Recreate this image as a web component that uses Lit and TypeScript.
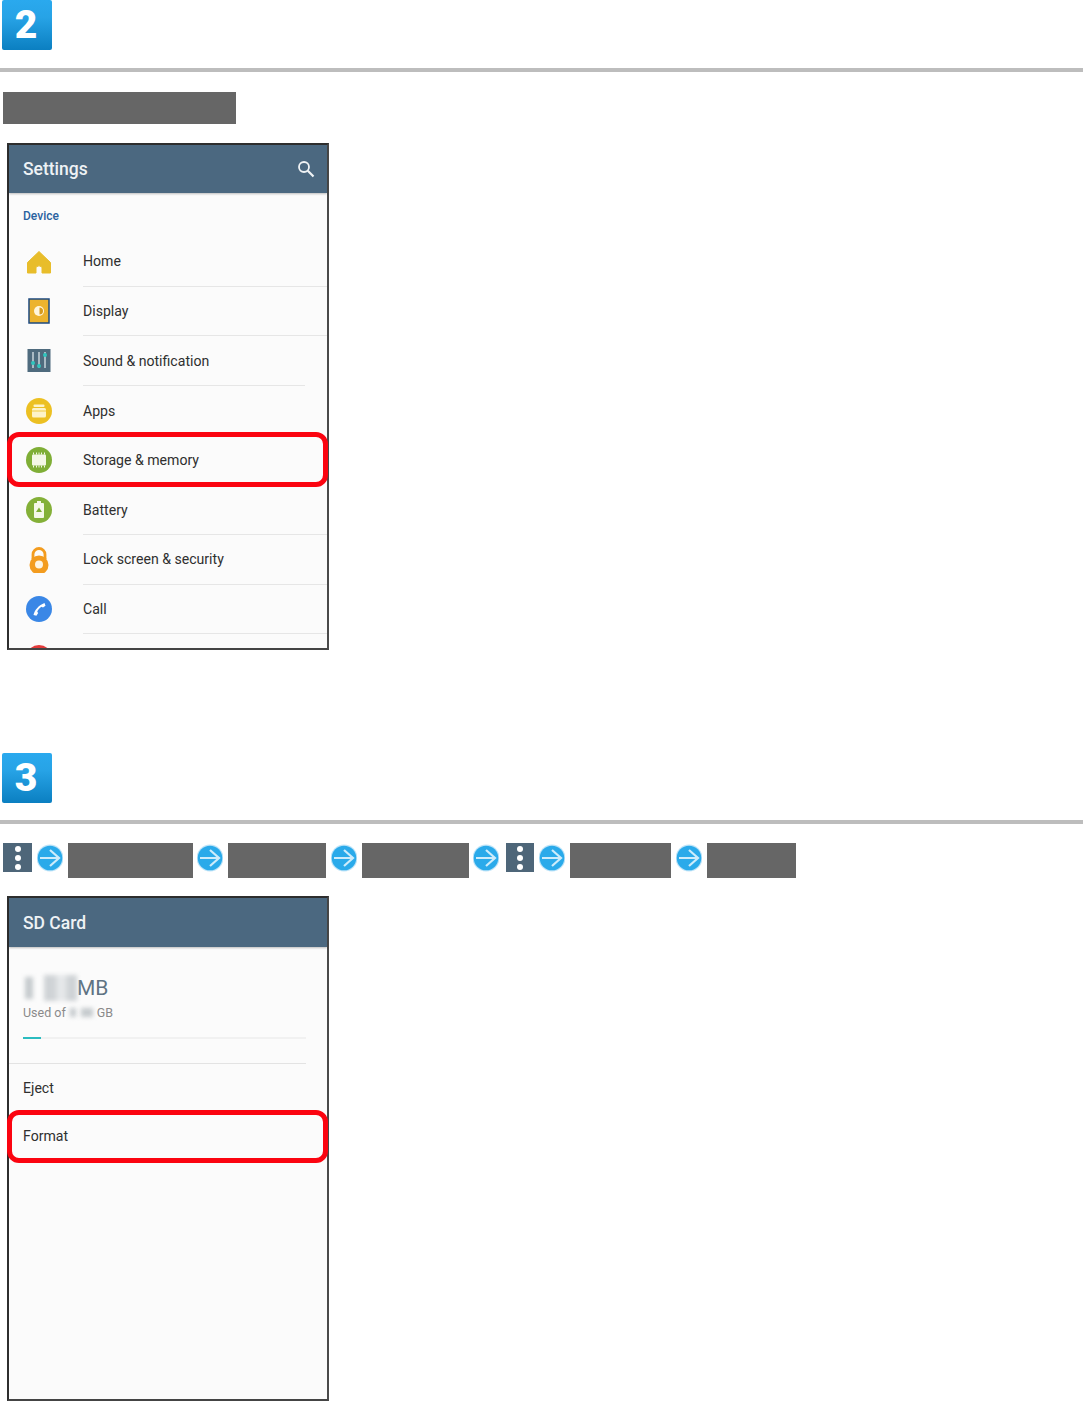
import { LitElement, html, css, svg } from "lit";
import { customElement } from "lit/decorators.js";

const icons: Record<string, unknown> = {
  home: svg`<path d="M13 2.500 L24.500 13.500 V24 H16 V18 Q13 15.500 10 18 V24 H1.500 V13.500 Z" fill="#e8bd2b" stroke="#e8bd2b" stroke-width="1" stroke-linejoin="round"/>`,
  display: svg`<rect x="3" y="1" width="20" height="24" fill="#ecb32e" stroke="#1d4a80" stroke-width="1.500"/><circle cx="13" cy="13" r="5" fill="#fff6dd"/><path d="M13.500 9.500a3.500 3.500 0 0 1 0 7z" fill="#d79a1c"/>`,
  sound: svg`<rect x="1.500" y="1" width="23" height="23" fill="#4f6b7e"/><path d="M7 4V20M13 4V20M19 4V20" stroke="#e6eef2" stroke-width="1.200"/><circle cx="7" cy="15" r="2" fill="#2fc4bd"/><circle cx="13" cy="18" r="2" fill="#2fc4bd"/><circle cx="19" cy="7" r="2" fill="#2fc4bd"/>`,
  apps: svg`<circle cx="13" cy="13" r="13" fill="#ecc022"/><rect x="7.500" y="6.500" width="11" height="2.500" rx="1" fill="#fdf3c9"/><rect x="6" y="10" width="14" height="9.500" rx="1.500" fill="#fdf3c9"/><path d="M6 13H20" stroke="#ecc022" stroke-width=".8"/>`,
  storage: svg`<circle cx="13" cy="13" r="13" fill="#7fae36"/><rect x="6" y="7.500" width="14" height="11" rx="1" fill="#f4f7e6"/><path d="M7.500 5.500V20.500M10.500 5.500V20.500M13 5.500V20.500M15.500 5.500V20.500M18.500 5.500V20.500" stroke="#f4f7e6" stroke-width="1" stroke-dasharray="2 11"/>`,
  battery: svg`<circle cx="13" cy="13" r="13" fill="#84b038"/><rect x="8" y="6" width="10" height="15" rx="1" fill="#f5f8e8"/><rect x="11" y="4" width="4" height="2" fill="#f5f8e8"/><path d="M13 10.500 L16 15 H10 Z" fill="#7fae36"/>`,
  lock: svg`<path d="M7 12V7.500a6 6 0 0 1 12 0V12" fill="none" stroke="#f39c1f" stroke-width="2.800"/><circle cx="13" cy="18" r="9.500" fill="#f39c1f"/><circle cx="13" cy="17.500" r="4" fill="#fdf4e2"/>`,
  call: svg`<circle cx="13" cy="13" r="13" fill="#3a87e6"/><path d="M7.500 19 C8.500 14 13 9 18.500 7 L19.500 9.800 L17 11.500 L15.500 10.700 C13.500 12 12 13.800 11.200 15.700 L12.200 17 L10.400 19.700 Z" fill="#fff"/>`,
  red: svg`<circle cx="13" cy="13" r="13" fill="#e33a3a"/>`,
};

const settings = [
  { t: "Home", i: "home" },
  { t: "Display", i: "display" },
  { t: "Sound & notification", i: "sound", short: true },
  { t: "Apps", i: "apps", none: true },
  { t: "Storage & memory", i: "storage", hl: true, none: true },
  { t: "Battery", i: "battery" },
  { t: "Lock screen & security", i: "lock" },
  { t: "Call", i: "call" },
  { t: "", i: "red", none: true, peek: true },
];

type Crumb = { k: "menu" | "arrow" | "bar"; w?: number; cls?: string };
const crumbs: Crumb[] = [
  { k: "menu" }, { k: "arrow" }, { k: "bar", w: 125 },
  { k: "arrow", cls: "tight" }, { k: "bar", w: 98 },
  { k: "arrow" }, { k: "bar", w: 107 },
  { k: "arrow", cls: "tight" }, { k: "menu", cls: "wide" }, { k: "arrow" }, { k: "bar", w: 101 },
  { k: "arrow" }, { k: "bar", w: 89 },
];

@customElement("app-root")
export class AppRoot extends LitElement {
  static styles = css`
    :host { display: block; width: 1083px; height: 1406px; overflow: hidden; background: #fff; font-family: Roboto, "Liberation Sans", sans-serif; }
    .step-three { margin-top: 103px; }
    .badge { width: 50px; height: 50px; box-sizing: border-box; padding: 0 2px 0 0; margin-left: 2px; border-radius: 2px; background: linear-gradient(#2aa9ee, #27a3e6 35%, #0b7fc1); display: flex; align-items: center; justify-content: center; color: #fff; font: 900 39px/1 Roboto, "Liberation Sans", sans-serif; }
    .rule { height: 4px; background: #bdbdbd; }
    .step-two .rule { margin-top: 18px; }
    .step-three .rule { margin-top: 17px; }
    .lead { width: 233px; height: 32px; margin: 20px 0 19px 3px; background: #666; }
    .crumbs { display: flex; align-items: flex-start; gap: 5px; margin: 19px 0 18px 3px; height: 35px; }
    .bar { height: 35px; background: #666; }
    .menu { width: 29px; height: 29px; background: #4e6679; display: flex; flex-direction: column; align-items: center; justify-content: center; gap: 3px; }
    .menu i { width: 6px; height: 6px; border-radius: 50%; background: #fff; }
    .menu.wide { width: 28px; margin-left: 2px; }
    .arrow { width: 26px; height: 28px; margin-top: 1px; display: block; }
    .arrow.tight { margin-left: -1px; }
    .phone { width: 322px; margin-left: 7px; box-sizing: border-box; border: 2px solid #2e2e2e; border-right-color: #4a4a4a; border-bottom-color: #444; background: #fbfbfb; }
    .phone.settings { height: 507px; }
    .phone.card { height: 505px; }
    .head { height: 48px; box-sizing: border-box; background: #4b6880; color: #eef2f5; display: flex; align-items: center; justify-content: space-between; padding: 0 12px 0 14px; font-size: 17.500px; font-weight: 500; box-shadow: 0 1px 2px rgba(0,0,0,.25); }
    .phone.card .head { height: 49px; }
    .section { height: 44px; box-sizing: border-box; padding: 1px 0 0 14px; display: flex; align-items: center; color: #2a629f; font-size: 12px; font-weight: 500; }
    .row { position: relative; height: 49.670px; box-sizing: border-box; display: flex; align-items: center; color: #2f2f2f; font-size: 14.100px; }
    .row.peek { height: 13.600px; overflow: hidden; align-items: flex-start; }
    .row.peek .icon { margin-top: 11px; }
    .icon { width: 26px; height: 26px; margin-left: 17px; margin-right: 31px; flex: none; }
    .label { flex: 1; align-self: stretch; display: flex; align-items: center; box-sizing: border-box; border-bottom: 1px solid #e6e6e6; }
    .row.short .label { flex: none; width: 222px; }
    .row.none .label { border-bottom: none; }
    .hl { position: absolute; left: -2px; right: -1px; top: -4px; bottom: -2px; border: 5px solid #fb0410; border-radius: 12px; pointer-events: none; }
    .usage { height: 116px; box-sizing: border-box; padding: 25px 0 0 14px; }
    .amount { display: flex; align-items: center; height: 32px; color: #5f7383; font-size: 21px; }
    .smudge { display: block; background: #c6cbce; filter: blur(2px); }
    .s1 { width: 8px; height: 22px; margin-left: 2px; margin-right: 11px; }
    .s2 { width: 33px; height: 26px; background: linear-gradient(90deg, #cfd3d6 0 30%, #e6e8ea 45% 60%, #cfd3d6 75%); }
    .used { display: flex; align-items: center; margin-top: -1px; color: #8a8a8a; font-size: 12.500px; height: 18px; gap: 4px; }
    .s3 { width: 6px; height: 9px; }
    .s4 { width: 12px; height: 9px; margin-left: 1px; }
    .track { margin-top: 16px; width: 283px; height: 2px; background: #f1f1f1; }
    .fill { width: 18px; height: 2px; background: #2bbcc0; }
    .divide { height: 1px; margin-right: 21px; background: #e3e3e3; }
    .item { position: relative; height: 48px; box-sizing: border-box; padding-left: 14px; display: flex; align-items: center; color: #2f2f2f; font-size: 14.100px; }
    .hl-card { position: absolute; left: -2px; right: -1px; top: -2px; bottom: -3px; border: 5px solid #fb0410; border-radius: 12px; pointer-events: none; }
  `;

  private arrow(cls = "") {
    return html`<svg class="arrow ${cls}" viewBox="0 0 26 28"><circle cx="13" cy="14" r="13.500" fill="#bfe4f8"/><circle cx="13" cy="14" r="12.300" fill="#2aaaea"/><path d="M3 14H22M13 6L22 14L13 22" fill="none" stroke="#cdecfb" stroke-width="2.200"/></svg>`;
  }

  private crumb(c: Crumb) {
    if (c.k === "menu") return html`<div class="menu ${c.cls ?? ""}"><i></i><i></i><i></i></div>`;
    if (c.k === "arrow") return this.arrow(c.cls);
    return html`<div class="bar" style="width:${c.w}px"></div>`;
  }

  render() {
    return html`
      <section class="step-two">
        <div class="badge">2</div>
        <div class="rule"></div>
        <div class="lead"></div>
        <div class="phone settings">
          <div class="head">
            <span>Settings</span>
            <svg width="18" height="18" viewBox="0 0 18 18"><circle cx="7" cy="7" r="5" fill="none" stroke="#f0f3f5" stroke-width="1.800"/><path d="M10.800 10.800L16.500 16.500" stroke="#f0f3f5" stroke-width="2.200"/></svg>
          </div>
          <div class="section">Device</div>
          ${settings.map((s) => html`
            <div class="row ${s.short ? "short" : ""} ${s.none ? "none" : ""} ${s.peek ? "peek" : ""}">
              <svg class="icon" viewBox="0 0 26 26">${icons[s.i]}</svg>
              <div class="label">${s.t}</div>
              ${s.hl ? html`<div class="hl"></div>` : ""}
            </div>`)}
        </div>
      </section>
      <section class="step-three">
        <div class="badge">3</div>
        <div class="rule"></div>
        <div class="crumbs">${crumbs.map((c) => this.crumb(c))}</div>
        <div class="phone card">
          <div class="head"><span>SD Card</span></div>
          <div class="usage">
            <div class="amount"><span class="smudge s1"></span><span class="smudge s2"></span><span>MB</span></div>
            <div class="used"><span>Used of</span><span class="smudge s3"></span><span class="smudge s4"></span><span>GB</span></div>
            <div class="track"><div class="fill"></div></div>
          </div>
          <div class="divide"></div>
          <div class="item">Eject</div>
          <div class="item">Format<div class="hl-card"></div></div>
        </div>
      </section>
    `;
  }
}
